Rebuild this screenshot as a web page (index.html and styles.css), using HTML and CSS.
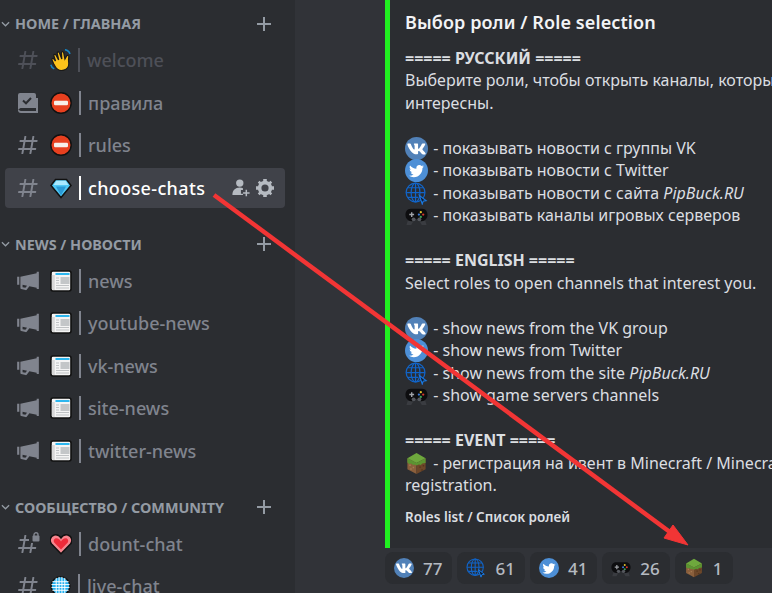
FILE: index.html
```html
<!DOCTYPE html>
<html lang="en">
<head>
  <meta charset="UTF-8">
  <meta name="viewport" content="width=device-width, initial-scale=1.0">
  <title>Role selection</title>
  <link rel="stylesheet" href="styles.css">
</head>
<body>
  <svg class="sprites" xmlns="http://www.w3.org/2000/svg">
    <symbol id="hash" viewBox="0 0 24 24">
      <path fill="currentColor" fill-rule="evenodd" d="M5.887 21c-.311 0-.547-.281-.493-.587L6 17H2.595c-.31 0-.546-.28-.492-.586l.175-1c.041-.24.249-.414.492-.414H6.350l1.060-6H4.005c-.31 0-.546-.28-.492-.586l.175-1C3.729 7.175 3.937 7 4.180 7h3.580l.637-3.587C8.439 3.174 8.647 3 8.889 3h.984c.311 0 .547.281.493.587L9.760 7h6l.637-3.587c.042-.239.25-.413.492-.413h.984c.311 0 .547.281.493.587L17.760 7h3.405c.31 0 .546.28.492.586l-.175 1c-.041.24-.249.414-.492.414H17.410l-1.060 6h3.405c.31 0 .546.28.492.586l-.175 1c-.041.24-.249.414-.492.414H16l-.637 3.587c-.042.239-.25.413-.492.413h-.984c-.311 0-.547-.281-.493-.587L14 17H8l-.637 3.587c-.042.239-.25.413-.492.413h-.984zM9.410 9l-1.060 6h6l1.060-6h-6z"/>
    </symbol>
    <symbol id="hash-lock" viewBox="0 0 24 24">
      <path fill="currentColor" fill-rule="evenodd" d="M5.887 21c-.311 0-.547-.281-.493-.587L6 17H2.595c-.31 0-.546-.28-.492-.586l.175-1c.041-.24.249-.414.492-.414H6.350l1.060-6H4.005c-.31 0-.546-.28-.492-.586l.175-1C3.729 7.175 3.937 7 4.180 7h3.580l.637-3.587C8.439 3.174 8.647 3 8.889 3h.984c.311 0 .547.281.493.587L9.760 7h6l.637-3.587c.042-.239.25-.413.492-.413h.984c.311 0 .547.281.493.587L17.760 7h3.405c.31 0 .546.28.492.586l-.175 1c-.041.24-.249.414-.492.414H17.410l-1.060 6h3.405c.31 0 .546.28.492.586l-.175 1c-.041.24-.249.414-.492.414H16l-.637 3.587c-.042.239-.25.413-.492.413h-.984c-.311 0-.547-.281-.493-.587L14 17H8l-.637 3.587c-.042.239-.25.413-.492.413h-.984zM9.410 9l-1.060 6h6l1.060-6h-6z"/>
      <rect x="13" y="0" width="11" height="11" fill="#2b2d31"/>
      <rect x="16.500" y="3.500" width="7" height="6" rx="1" fill="currentColor"/>
      <path d="M18 4V2.800a2 2 0 0 1 4 0V4" fill="none" stroke="currentColor" stroke-width="1.400"/>
    </symbol>
    <symbol id="rules" viewBox="0 0 24 24">
      <path fill="currentColor" d="M4 2h14a2 2 0 0 1 2 2v13H5a2 2 0 0 0-1.900 1.300L2 18V4a2 2 0 0 1 2-2z"/>
      <path fill="currentColor" d="M22 7v15H5a3 3 0 0 1-3-3c0-.5.2-1 .4-1.200.2 1.300 1.300 2.200 2.600 2.200h15V7h2z"/>
      <path fill="none" stroke="#2b2d31" stroke-width="2" d="M7 9.500l3 2.800 5-5.300"/>
    </symbol>
    <symbol id="megaphone" viewBox="1 2.500 21 19">
      <path fill="currentColor" d="M3.900 8.260H2v7.034h1.900V8.260z"/>
      <path fill="currentColor" fill-rule="evenodd" d="M19.100 4v1.127L4.850 8.264v9.854c0 .432.296.807.720.914l3.800.941c.076.018.154.027.230.027.296 0 .578-.136.760-.376l2.346-3.100 6.394 1.406v1.129H21V4h-1.900zM9.218 17.994L6.750 17.383v-2.171l3.921.864-1.453 1.918z"/>
    </symbol>
    <symbol id="add-user" viewBox="1.500 1.500 22 22">
      <circle cx="11" cy="6.500" r="4.500" fill="currentColor"/>
      <path fill="currentColor" d="M2 21c0-5.500 3.500-9 9-9 1.500 0 2.800.3 3.900.8V15h-2.500v4.500h2.500V21H2z"/>
      <path fill="none" stroke="currentColor" stroke-width="1.800" d="M19 14.500v8M15 18.500h8"/>
    </symbol>
    <symbol id="gear" viewBox="2 2 20 20">
      <path fill="currentColor" fill-rule="evenodd" d="M19.738 10H22v4h-2.261c-.241.931-.639 1.798-1.174 2.564L20 18l-2 2-1.435-1.436c-.768.535-1.633.934-2.565 1.174V22h-4v-2.262c-.931-.24-1.797-.639-2.564-1.174L6 20l-2-2 1.436-1.436C4.901 15.799 4.502 14.932 4.262 14H2v-4h2.262c.240-.932.638-1.798 1.174-2.564L4 6l2-2 1.436 1.436C8.202 4.900 9.068 4.502 10 4.262V2h4v2.261c.932.241 1.797.639 2.565 1.174L18 4l2 2-1.436 1.436c.535.766.934 1.633 1.174 2.564zM12 16a4 4 0 1 0 0-8 4 4 0 0 0 0 8z"/>
    </symbol>
    <symbol id="wave" viewBox="1 .5 19.500 21">
      <path fill="#fcc21b" stroke="#1a1a1a" stroke-width="1.200" d="M4.200 14.500L2.600 11c-.4-1.200 1.200-2 2-.9L6 12 4.400 7c-.4-1.300 1.400-2 2-.8L9 11 7.600 4.600c-.3-1.400 1.700-1.800 2.100-.5L12 10l-.4-6c0-1.400 2-1.500 2.200-.1L15 10l1.600-2.800c.7-1.200 2.400-.5 2.100.9-.4 1.800-.3 3.500-.1 5.200.4 3.400-1.400 6.500-4.600 7.400-3.500 1-6.800-.6-8.500-3.700z"/>
      <path fill="none" stroke="#1685c4" stroke-width="1.500" d="M15 1.200c2.300.3 4 1.700 4.800 4M1.500 15.500c.5 1.900 1.500 3.200 3.300 4"/>
    </symbol>
    <symbol id="no-entry" viewBox="0 0 22 22">
      <circle cx="11" cy="11" r="10.200" fill="#e8401f" stroke="#111" stroke-width="1.400"/>
      <rect x="4" y="8.800" width="14" height="4.400" rx="1.200" fill="#f7efe9"/>
    </symbol>
    <symbol id="gem" viewBox="0 0 22 22">
      <path fill="#4fc8f5" stroke="#111" stroke-width="1.500" d="M5.500 2.500h11L21 8.500 11 20.500 1 8.500z"/>
      <path fill="#a8e9ff" d="M6.500 3.800h9L18.500 8h-15z"/>
      <path fill="#2a9ad6" d="M6 9.500h10l-5 9z"/>
    </symbol>
    <symbol id="paper" viewBox="0 0 22 22">
      <rect x="1" y="1" width="20" height="20" rx="2" fill="#f4f4f4" stroke="#111" stroke-width="1.600"/>
      <path fill="#d8d8d8" d="M1.800 5h3v15h-1.500a1.500 1.500 0 0 1-1.500-1.500z"/>
      <rect x="5.500" y="3" width="14" height="2" fill="#2cb6ee"/>
      <rect x="10.500" y="7" width="9" height="7" fill="#c3c6c8"/>
      <path stroke="#bfc2c4" stroke-width="1" d="M6 8h3M6 10.500h3M6 13h3M6 15.500h13M6 18h13"/>
    </symbol>
    <symbol id="heart" viewBox="1 1.500 20 20">
      <path fill="#f7868f" stroke="#111" stroke-width="1.400" d="M11 20.300L2.400 11.500C.1 9 1 4.200 4.800 3.300c2.500-.6 4.900.6 6.200 2.700 1.300-2.100 3.700-3.300 6.200-2.700C21 4.200 21.900 9 19.600 11.500z"/>
      <path fill="#ee2b3a" d="M11 16.500L5 10.300C3.700 8.600 4.700 6.300 6.800 6.300c1.800 0 3.400 1.200 4.200 3 .8-1.800 2.400-3 4.200-3 2.100 0 3.100 2.300 1.800 4z"/>
    </symbol>
    <symbol id="globe" viewBox="0 0 22 22">
      <circle cx="11" cy="11" r="9.800" fill="#24b0f0" stroke="#111" stroke-width="1.500"/>
      <path fill="none" stroke="#fff" stroke-width="1" d="M2.500 6.500h17M1.500 9.500h19M1.500 12.500h19M2.500 15.500h17M6.500 2.500v17M9.500 1.500v19M12.500 1.500v19M15.500 2.500v17"/>
    </symbol>
    <symbol id="vk" viewBox="0 0 24 24">
      <circle cx="12" cy="12" r="12" fill="#5181b8"/>
      <g transform="translate(-2.400 -2.400) scale(1.200)">
        <path fill="#fff" d="M19.376 17.123h-1.744c-.66 0-.864-.525-2.050-1.727-1.033-1-1.490-1.135-1.744-1.135-.356 0-.458.102-.458.593v1.575c0 .424-.135.678-1.253.678-1.846 0-3.896-1.118-5.335-3.202C4.624 10.857 4.030 8.570 4.030 8.096c0-.254.102-.491.593-.491h1.744c.440 0 .610.203.780.678.863 2.490 2.303 4.675 2.896 4.675.220 0 .322-.102.322-.660V9.721c-.068-1.186-.695-1.287-.695-1.710 0-.204.170-.407.440-.407h2.744c.373 0 .508.203.508.643v3.473c0 .372.170.508.271.508.220 0 .407-.136.813-.542 1.254-1.406 2.151-3.574 2.151-3.574.119-.254.322-.491.763-.491h1.744c.525 0 .644.270.525.643-.220 1.017-2.354 4.031-2.354 4.031-.186.305-.254.440 0 .780.186.254.796.779 1.203 1.253.745.847 1.320 1.558 1.473 2.050.170.490-.085.744-.576.744z"/>
      </g>
    </symbol>
    <symbol id="twitter" viewBox="0 0 24 24">
      <circle cx="12" cy="12" r="12" fill="#4d8fd6"/>
      <g transform="translate(4.200 4.800) scale(.65)">
        <path fill="#fff" d="M23.953 4.570a10 10 0 0 1-2.825.775 4.958 4.958 0 0 0 2.163-2.723c-.951.555-2.005.959-3.127 1.184a4.920 4.920 0 0 0-8.384 4.482C7.690 8.095 4.067 6.130 1.640 3.162a4.822 4.822 0 0 0-.666 2.475c0 1.710.870 3.213 2.188 4.096a4.904 4.904 0 0 1-2.228-.616v.060a4.923 4.923 0 0 0 3.946 4.827 4.996 4.996 0 0 1-2.212.085 4.936 4.936 0 0 0 4.604 3.417 9.867 9.867 0 0 1-6.102 2.105c-.390 0-.779-.023-1.170-.067a13.995 13.995 0 0 0 7.557 2.209c9.053 0 13.998-7.496 13.998-13.985 0-.210 0-.420-.015-.630A9.935 9.935 0 0 0 24 4.590z"/>
      </g>
    </symbol>
    <symbol id="web" viewBox="0 0 24 24">
      <g fill="none" stroke="#1164c8" stroke-width="1.300">
        <circle cx="11" cy="11" r="9.800"/>
        <ellipse cx="11" cy="11" rx="4.600" ry="9.800"/>
        <path d="M11 1.200v19.600M1.200 11h19.600M2.600 6h16.800M2.600 16h11"/>
      </g>
      <path fill="#0e1a2a" stroke="#1a78e0" stroke-width="1.200" d="M15 14l7 5.500-3 .5-1 3z"/>
    </symbol>
    <symbol id="pad" viewBox="0 0 24 24">
      <path fill="#3a3c41" d="M3 17l-1.500 5h5l2-3.500zM21 17l1.500 5h-5l-2-3.500z"/>
      <path fill="#0d0d0f" d="M6 5h12c3.500 0 5.500 3 5.500 6.500S20.500 18 17.500 18c-1.500 0-2.500-1-3.500-2h-4c-1 1-2 2-3.500 2C3.500 18 .5 15 .5 11.500S2.500 5 6 5z"/>
      <path stroke="#a0a3a8" stroke-width="1.500" d="M4.500 11h5M7 8.500v5"/>
      <circle cx="16.500" cy="8.500" r="1.200" fill="#e2c02c"/>
      <circle cx="19" cy="11" r="1.200" fill="#d8392d"/>
      <circle cx="14.500" cy="11" r="1.200" fill="#3b7bd8"/>
      <circle cx="16.500" cy="13.500" r="1.200" fill="#3aa655"/>
      <circle cx="9" cy="16" r="2" fill="#55585e"/>
      <circle cx="15" cy="16" r="2" fill="#55585e"/>
    </symbol>
    <symbol id="grass" viewBox="0 0 24 24">
      <path fill="#8a5f3c" d="M2.500 6.500L12 11.500v11.500l-9.500-5z"/>
      <path fill="#6d4729" d="M21.500 6.500L12 11.500v11.500l9.500-5z"/>
      <path fill="#6ea83d" d="M12 1l9.500 5.500L12 11.500 2.500 6.500z"/>
      <path fill="#5b9431" d="M2.500 6.500L12 11.500v2.500l-2-1-1.500.5-2-1.500-2 .5-2-1.500zM21.500 6.500L12 11.500v2.500l2.500-1 2 .5 1.500-1.500 3.500-.5z"/>
      <path fill="#a77b52" d="M4.500 13h1.500v1.500H4.500zM8 15.500h1.500V17H8zM5.500 17H7v1.500H5.500z"/>
      <path fill="#54351d" d="M15 15h1.500v1.500H15zM18.500 13.500H20V15h-1.500zM17 18h1.500v1.500H17z"/>
    </symbol>
  </svg>

  <div class="app">
    <nav class="sidebar">
      <section class="category">
        <header class="category-head">
          <svg class="chevron" viewBox="0 0 10 6"><path d="M1 1l4 4 4-4"/></svg>
          <h2>Home / Главная</h2>
          <svg class="plus" viewBox="0 0 14 14"><path d="M7 0v14M0 7h14"/></svg>
        </header>
        <a class="channel channel-muted">
          <svg class="channel-icon"><use href="#hash"/></svg>
          <svg class="emoji emoji-narrow"><use href="#wave"/></svg>
          <span class="sep"></span><span class="name">welcome</span>
        </a>
        <a class="channel">
          <svg class="channel-icon"><use href="#rules"/></svg>
          <svg class="emoji"><use href="#no-entry"/></svg>
          <span class="sep"></span><span class="name">правила</span>
        </a>
        <a class="channel">
          <svg class="channel-icon"><use href="#hash"/></svg>
          <svg class="emoji"><use href="#no-entry"/></svg>
          <span class="sep"></span><span class="name">rules</span>
        </a>
        <a class="channel channel-active">
          <svg class="channel-icon"><use href="#hash"/></svg>
          <svg class="emoji"><use href="#gem"/></svg>
          <span class="sep"></span><span class="name">choose-chats</span>
          <span class="channel-actions">
            <svg class="action"><use href="#add-user"/></svg>
            <svg class="action"><use href="#gear"/></svg>
          </span>
        </a>
      </section>

      <section class="category">
        <header class="category-head">
          <svg class="chevron" viewBox="0 0 10 6"><path d="M1 1l4 4 4-4"/></svg>
          <h2>News / Новости</h2>
          <svg class="plus" viewBox="0 0 14 14"><path d="M7 0v14M0 7h14"/></svg>
        </header>
        <a class="channel">
          <svg class="channel-icon"><use href="#megaphone"/></svg>
          <svg class="emoji"><use href="#paper"/></svg>
          <span class="sep"></span><span class="name">news</span>
        </a>
        <a class="channel">
          <svg class="channel-icon"><use href="#megaphone"/></svg>
          <svg class="emoji"><use href="#paper"/></svg>
          <span class="sep"></span><span class="name">youtube-news</span>
        </a>
        <a class="channel">
          <svg class="channel-icon"><use href="#megaphone"/></svg>
          <svg class="emoji"><use href="#paper"/></svg>
          <span class="sep"></span><span class="name">vk-news</span>
        </a>
        <a class="channel">
          <svg class="channel-icon"><use href="#megaphone"/></svg>
          <svg class="emoji"><use href="#paper"/></svg>
          <span class="sep"></span><span class="name">site-news</span>
        </a>
        <a class="channel">
          <svg class="channel-icon"><use href="#megaphone"/></svg>
          <svg class="emoji"><use href="#paper"/></svg>
          <span class="sep"></span><span class="name">twitter-news</span>
        </a>
      </section>

      <section class="category">
        <header class="category-head">
          <svg class="chevron" viewBox="0 0 10 6"><path d="M1 1l4 4 4-4"/></svg>
          <h2>Сообщество / Community</h2>
          <svg class="plus" viewBox="0 0 14 14"><path d="M7 0v14M0 7h14"/></svg>
        </header>
        <a class="channel">
          <svg class="channel-icon"><use href="#hash-lock"/></svg>
          <svg class="emoji"><use href="#heart"/></svg>
          <span class="sep"></span><span class="name">dount-chat</span>
        </a>
        <a class="channel">
          <svg class="channel-icon"><use href="#hash"/></svg>
          <svg class="emoji emoji-narrow"><use href="#globe"/></svg>
          <span class="sep"></span><span class="name">live-chat</span>
        </a>
      </section>
    </nav>

    <main class="content">
      <article class="embed">
        <h1 class="embed-title">Выбор роли / Role selection</h1>
        <div class="embed-body">
          <p class="line"><b>===== РУССКИЙ =====</b></p>
          <p class="line">Выберите роли, чтобы открыть каналы, которые вам</p>
          <p class="line">интересны.</p>
          <p class="line"></p>
          <p class="line"><svg class="inline-emoji"><use href="#vk"/></svg> - показывать новости с группы VK</p>
          <p class="line"><svg class="inline-emoji"><use href="#twitter"/></svg> - показывать новости с Twitter</p>
          <p class="line"><svg class="inline-emoji"><use href="#web"/></svg> - показывать новости с сайта <i>PipBuck.RU</i></p>
          <p class="line"><svg class="inline-emoji"><use href="#pad"/></svg> - показывать каналы игровых серверов</p>
          <p class="line"></p>
          <p class="line"><b>===== ENGLISH =====</b></p>
          <p class="line">Select roles to open channels that interest you.</p>
          <p class="line"></p>
          <p class="line"><svg class="inline-emoji"><use href="#vk"/></svg> - show news from the VK group</p>
          <p class="line"><svg class="inline-emoji"><use href="#twitter"/></svg> - show news from Twitter</p>
          <p class="line"><svg class="inline-emoji"><use href="#web"/></svg> - show news from the site <i>PipBuck.RU</i></p>
          <p class="line"><svg class="inline-emoji"><use href="#pad"/></svg> - show game servers channels</p>
          <p class="line"></p>
          <p class="line"><b>===== EVENT =====</b></p>
          <p class="line"><svg class="inline-emoji"><use href="#grass"/></svg> - регистрация на ивент в Minecraft / Minecraft event</p>
          <p class="line">registration.</p>
        </div>
        <footer class="embed-footer">Roles list / Список ролей</footer>
      </article>

      <div class="reactions">
        <button class="reaction"><svg class="reaction-emoji"><use href="#vk"/></svg>77</button>
        <button class="reaction"><svg class="reaction-emoji"><use href="#web"/></svg>61</button>
        <button class="reaction"><svg class="reaction-emoji"><use href="#twitter"/></svg>41</button>
        <button class="reaction"><svg class="reaction-emoji"><use href="#pad"/></svg>26</button>
        <button class="reaction"><svg class="reaction-emoji"><use href="#grass"/></svg>1</button>
      </div>
    </main>
  </div>

  <!-- annotation arrow drawn over the screenshot -->
  <svg class="arrow" viewBox="0 0 772 593">
    <path d="M214 195L678 538" fill="none" stroke="#f23535" stroke-width="4.500"/>
    <path d="M688 545L664 538 673 525z" fill="#f23535" stroke="#f23535" stroke-width="1"/>
  </svg>
</body>
</html>
```

FILE: styles.css
```css
html, body {
  height: 100%;
}
body {
  margin: 0;
  overflow: hidden;
  background-color: #313338;
  color: #dbdee1;
  font-family: "Noto Sans", "Open Sans", sans-serif;
}
.sprites {
  display: none;
}
.app {
  display: flex;
  height: 593px;
  overflow: hidden;
}

/* channel list */
.sidebar {
  flex: 0 0 295px;
  padding-top: 11.5px;
  background-color: #2b2d31;
  box-sizing: border-box;
}
.category {
  margin-bottom: 24.5px;
}
.category-head {
  display: flex;
  align-items: center;
  height: 24px;
  margin-bottom: 4.5px;
  color: #949ba4;
}
.category-head h2 {
  flex: 1;
  margin: 0 0 0 5px;
  font-size: 14.4px;
  font-weight: 700;
  text-transform: uppercase;
  white-space: nowrap;
}
.chevron {
  width: 9px;
  height: 6px;
  margin-left: 1px;
  fill: none;
  stroke: #949ba4;
  stroke-width: 1.4;
}
.plus {
  width: 14px;
  height: 14px;
  margin-right: 24px;
  stroke: #949ba4;
  stroke-width: 2;
}
.channel {
  display: flex;
  align-items: center;
  width: 280px;
  height: 40px;
  margin: 0 0 2.5px 5px;
  padding-left: 11px;
  border-radius: 4px;
  box-sizing: border-box;
  color: #80848e;
  font-size: 18px;
  font-weight: 500;
}
.channel-muted {
  color: #4e5058;
}
.channel-active {
  background-color: #404249;
  color: #fff;
}
.channel-icon {
  flex: none;
  width: 24px;
  height: 24px;
}
.channel-active .channel-icon {
  color: #80848e;
}
.emoji {
  flex: none;
  width: 22px;
  height: 22px;
  margin-left: 10px;
}
.emoji-narrow {
  width: 21px;
}
.sep {
  flex: none;
  width: 2px;
  height: 24px;
  margin-left: 7px;
  background-color: currentColor;
}
.name {
  margin-left: 7px;
  white-space: nowrap;
}
.channel-active .name {
  letter-spacing: .35px;
}
.channel-actions {
  display: flex;
  gap: 6px;
  margin-left: auto;
  margin-right: 11px;
}
.action {
  width: 18px;
  height: 18px;
  color: #b5bac1;
}

/* message area */
.content {
  flex: 1;
  min-width: 0;
  padding-left: 90px;
}
.embed {
  box-sizing: border-box;
  width: 560px;
  height: 548px;
  padding: 10px 16px 0 15px;
  border-left: 5px solid #20f020;
  background-color: #2b2d31;
  white-space: nowrap;
}
.embed-title {
  margin: 0;
  font-size: 18px;
  line-height: 24px;
  font-weight: 600;
  letter-spacing: .1px;
  color: #f2f3f5;
}
.embed-body {
  margin-top: 12.5px;
  font-size: 16px;
}
.line {
  height: 22.5px;
  margin: 0;
  line-height: 22.5px;
}
.line b {
  font-weight: 700;
}
.inline-emoji {
  width: 23px;
  height: 23px;
  margin-right: 1px;
  vertical-align: -6px;
}
.embed-footer {
  margin-top: 9px;
  font-size: 13.5px;
  font-weight: 600;
  line-height: 22px;
}
.reactions {
  display: flex;
  gap: 5px;
  margin-top: 4px;
}
.reaction {
  display: flex;
  align-items: center;
  gap: 9px;
  height: 32px;
  padding: 0 10px 0 9px;
  border: none;
  border-radius: 8px;
  background-color: #2b2d31;
  color: #b5bac1;
  font-family: inherit;
  font-size: 17px;
  font-weight: 500;
}
.reaction-emoji {
  width: 20px;
  height: 20px;
}
.arrow {
  position: absolute;
  top: 0;
  left: 0;
  width: 772px;
  height: 593px;
  pointer-events: none;
}
```
